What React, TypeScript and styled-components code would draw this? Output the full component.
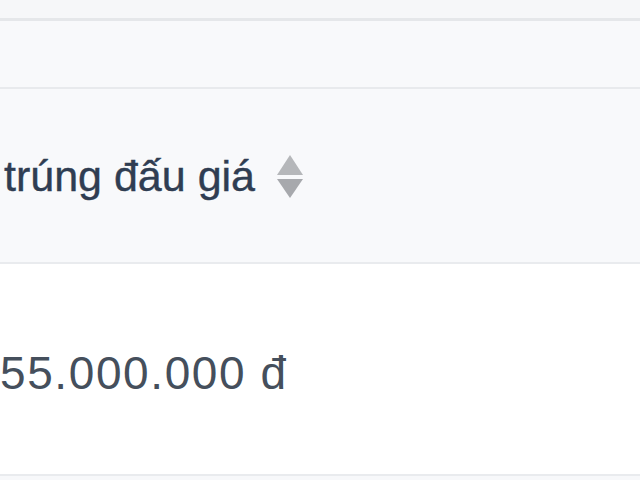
import React from "react";
import styled, { createGlobalStyle } from "styled-components";

const Global = createGlobalStyle`
  html, body { margin: 0; padding: 0; background: #f7f8fa; }
  body { font-family: "Liberation Sans", Arial, sans-serif; }
`;

const Page = styled.div`
  width: 640px;
  height: 480px;
  overflow: hidden;
  display: flex;
  flex-direction: column;
  background: #f7f8fa;
`;

const Strip = styled.div<{ $h: number; $bg: string; $border: string; $bw: number }>`
  height: ${(p) => p.$h}px;
  flex: none;
  background: ${(p) => p.$bg};
  border-bottom: ${(p) => p.$bw}px solid ${(p) => p.$border};
`;

const HeaderRow = styled.div`
  height: 175px;
  flex: none;
  display: flex;
  align-items: center;
  background: #f8f9fb;
  border-bottom: 2px solid #e9ebee;
  box-sizing: border-box;
  padding-top: 2px;
`;

const HeaderCell = styled.div`
  display: flex;
  align-items: center;
  gap: 21px;
  padding-left: 4px;
  white-space: nowrap;
`;

const HeaderText = styled.span`
  font-size: 43px;
  font-weight: 400;
  color: #2f3d52;
  -webkit-text-stroke: 0.4px #2f3d52;
`;

const BodyRow = styled.div`
  height: 212px;
  flex: none;
  display: flex;
  align-items: center;
  background: #ffffff;
  border-bottom: 2px solid #e9ebee;
  box-sizing: border-box;
  padding-top: 8px;
`;

const BodyText = styled.span`
  font-size: 46px;
  letter-spacing: 1.6px;
  color: #454f5c;
  white-space: nowrap;
`;

const SortIcon = () => (
  <svg width="28" height="44" viewBox="0 0 28 44" style={{ display: "block" }}>
    <polygon points="14,0 27,20 1,20" fill="#b5b7ba" />
    <polygon points="1,24 27,24 14,43" fill="#a7a9ad" />
  </svg>
);

export default function App() {
  return (
    <Page>
      <Global />
      <Strip $h={18} $bg="#f6f7f9" $border="#e5e7ea" $bw={3} />
      <Strip $h={66} $bg="#f8f9fb" $border="#e8eaed" $bw={2} />
      <HeaderRow>
        <HeaderCell>
          <HeaderText>trúng đấu giá</HeaderText>
          <SortIcon />
        </HeaderCell>
      </HeaderRow>
      <BodyRow>
        <BodyText>55.000.000 đ</BodyText>
      </BodyRow>
    </Page>
  );
}
